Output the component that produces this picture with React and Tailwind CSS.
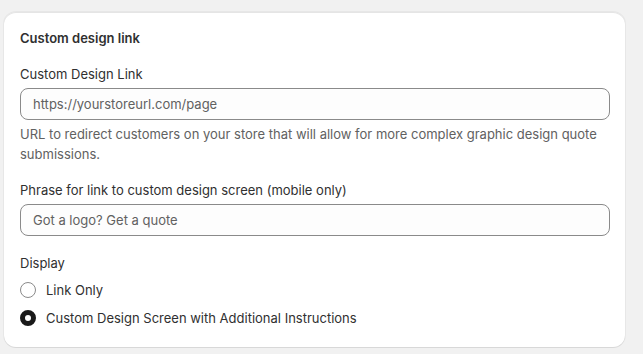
import React, { useState } from "react";

const Radio = ({ checked, label, onChange }) => (
  <label className="flex items-center gap-2.5 h-7 cursor-pointer" onClick={onChange}>
    <span
      className={
        checked
          ? "w-4 h-4 rounded-full border-[5px] border-[#1a1a1a] bg-white"
          : "w-4 h-4 rounded-full border border-[#8a8a8a] bg-white"
      }
    ></span>
    <span>{label}</span>
  </label>
);

export default function App() {
  const [display, setDisplay] = useState("screen");

  return (
    <div className="w-[643px] h-[354px] bg-[#f1f1f1] pt-3 pl-1 text-[13px] leading-5 text-[#303030] font-['Inter','Liberation_Sans',sans-serif]">
      <div className="w-[621px] bg-white rounded-xl shadow-[0_1px_0_0_rgba(26,26,26,0.07),0_1px_0_0_rgba(204,204,204,0.5)_inset,0_0_0_1px_rgba(0,0,0,0.04)] p-4 pb-[15px]">
        <h2 className="font-semibold text-[#303030]">Custom design link</h2>

        <div className="mt-4">
          <p>Custom Design Link</p>
          <input
            className="mt-1 w-[590px] h-8 px-3 rounded-lg border border-[#8a8a8a] bg-[#fdfdfd] outline-none placeholder:text-[#616161]"
            placeholder="https://yourstoreurl.com/page"
          />
          <p className="mt-1 text-[#616161]">
            URL to redirect customers on your store that will allow for more complex graphic design quote submissions.
          </p>
        </div>

        <div className="mt-4">
          <p>Phrase for link to custom design screen (mobile only)</p>
          <input
            className="mt-1 w-[590px] h-8 px-3 rounded-lg border border-[#8a8a8a] bg-[#fdfdfd] outline-none placeholder:text-[#616161]"
            placeholder="Got a logo? Get a quote"
          />
        </div>

        <div className="mt-[17px]">
          <p>Display</p>
          <div className="mt-[3px] flex flex-col">
            <Radio checked={display === "link"} label="Link Only" onChange={() => setDisplay("link")} />
            <Radio
              checked={display === "screen"}
              label="Custom Design Screen with Additional Instructions"
              onChange={() => setDisplay("screen")}
            />
          </div>
        </div>
      </div>
    </div>
  );
}
